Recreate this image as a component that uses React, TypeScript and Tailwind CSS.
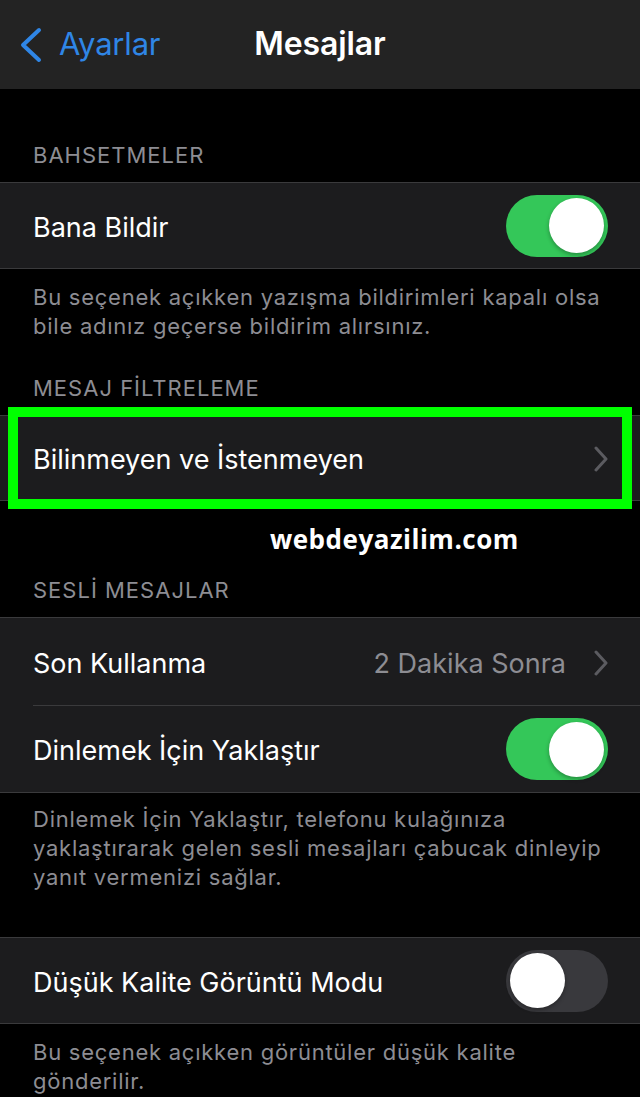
import React from "react";

const font = { fontFamily: "Inter, 'Noto Sans', 'Liberation Sans', sans-serif" };

function Toggle({ on }: { on: boolean }) {
  return (
    <div
      className={
        "relative flex h-[62px] w-[102px] shrink-0 items-center rounded-full px-[4px] " +
        (on ? "justify-end bg-[#34c759]" : "justify-start bg-[#39393d]")
      }
    >
      <div className="h-[55px] w-[55px] rounded-full bg-white shadow-[0_2px_4px_rgba(0,0,0,0.3)]" />
    </div>
  );
}

function Chevron() {
  return (
    <svg width="14" height="26" viewBox="0 0 14 26" className="mt-[2px] shrink-0">
      <path d="M2 2 L12 13 L2 24" fill="none" stroke="#5b5b60" strokeWidth="3" strokeLinecap="round" strokeLinejoin="round" />
    </svg>
  );
}

function Header({ children, pt }: { children: React.ReactNode; pt: string }) {
  return (
    <div className={"px-[33px] pb-[13px] text-[22px] leading-[28px] tracking-[1px] text-[#8d8d93] " + pt}>
      {children}
    </div>
  );
}

function Footer({ lines }: { lines: string[] }) {
  return (
    <div className="px-[33px] pt-[14px] text-[22px] leading-[29px] tracking-[0.75px] text-[#8d8d93]">
      {lines.map((l, i) => (
        <div key={i} className="whitespace-nowrap">
          {l}
        </div>
      ))}
    </div>
  );
}

function Label({ children, gray }: { children: React.ReactNode; gray?: boolean }) {
  return (
    <span className={"mt-[5px] text-[27px] " + (gray ? "text-[#8d8d93]" : "text-white")}>{children}</span>
  );
}

export default function App() {
  return (
    <div className="min-h-[1097px] w-[640px] overflow-hidden bg-black text-white" style={font}>
      {/* Nav bar */}
      <div className="relative flex h-[89px] items-center bg-[#232323]">
        <div className="flex items-center pl-[18px]">
          <svg width="26" height="36" viewBox="0 0 26 36">
            <path d="M21 3 L5 18 L21 33" fill="none" stroke="#2f86e6" strokeWidth="4" strokeLinecap="round" strokeLinejoin="round" />
          </svg>
          <span className="ml-[15px] text-[31px] tracking-[-0.2px] text-[#2f86e6]">Ayarlar</span>
        </div>
        <div className="absolute left-1/2 top-[22px] -translate-x-1/2 text-[32px] font-semibold leading-[44px] tracking-[-0.1px] text-white">
          Mesajlar
        </div>
      </div>

      <Header pt="pt-[52px]">BAHSETMELER</Header>
      <div className="flex h-[87px] items-center justify-between border-y border-[#3a3a3c] bg-[#1c1c1e] pl-[33px] pr-[32px]">
        <Label>Bana Bildir</Label>
        <Toggle on />
      </div>
      <Footer
        lines={[
          "Bu seçenek açıkken yazışma bildirimleri kapalı olsa",
          "bile adınız geçerse bildirim alırsınız.",
        ]}
      />

      <Header pt="pt-[33px]">MESAJ FİLTRELEME</Header>
      <div className="relative">
        <div className="flex h-[86px] items-center justify-between border-y border-[#3a3a3c] bg-[#1c1c1e] pl-[33px] pr-[32px]">
          <Label>Bilinmeyen ve İstenmeyen</Label>
          <Chevron />
        </div>
        <div className="pointer-events-none absolute -top-[8px] -bottom-[8px] left-[8px] right-[8px] border-[10px] border-[#00ff00]" />
      </div>

      <div className="relative">
        <div
          className="absolute left-[270px] top-[21px] text-[26px] font-bold leading-[34px] tracking-[0.5px] text-white"
          style={{ fontFamily: "'Open Sans', 'Noto Sans', sans-serif" }}
        >
          webdeyazilim.com
        </div>
        <Header pt="pt-[75px]">SESLİ MESAJLAR</Header>
      </div>
      <div className="border-y border-[#3a3a3c] bg-[#1c1c1e]">
        <div className="flex h-[87px] items-center justify-between pl-[33px] pr-[32px]">
          <Label>Son Kullanma</Label>
          <div className="flex items-center gap-[28px]">
            <Label gray>2 Dakika Sonra</Label>
            <Chevron />
          </div>
        </div>
        <div className="ml-[33px] h-px bg-[#3a3a3c]" />
        <div className="flex h-[86px] items-center justify-between pl-[33px] pr-[32px]">
          <Label>Dinlemek İçin Yaklaştır</Label>
          <Toggle on />
        </div>
      </div>
      <div className="-mt-[2px]">
        <Footer
          lines={[
            "Dinlemek İçin Yaklaştır, telefonu kulağınıza",
            "yaklaştırarak gelen sesli mesajları çabucak dinleyip",
            "yanıt vermenizi sağlar.",
          ]}
        />
      </div>

      <div className="h-[45px]" />
      <div className="flex h-[87px] items-center justify-between border-y border-[#3a3a3c] bg-[#1c1c1e] pl-[33px] pr-[32px]">
        <Label>Düşük Kalite Görüntü Modu</Label>
        <Toggle on={false} />
      </div>
      <Footer lines={["Bu seçenek açıkken görüntüler düşük kalite", "gönderilir."]} />
    </div>
  );
}
